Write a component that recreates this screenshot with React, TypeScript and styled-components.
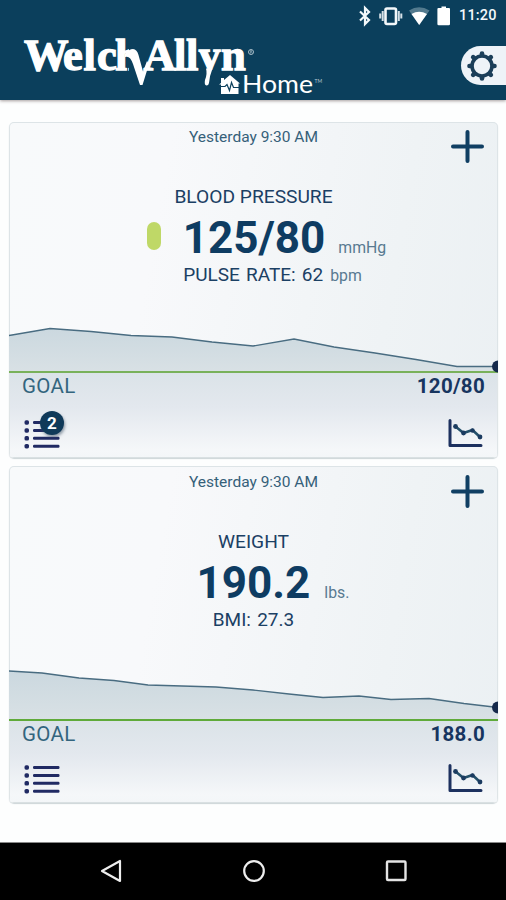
import React from 'react';
import styled, { createGlobalStyle } from 'styled-components';

const NAVY = '#0b3f5c';
const INK = '#17355f';

const GlobalStyle = createGlobalStyle`
  * { box-sizing: border-box; }
  body { margin: 0; background: #fdfefe; font-family: Roboto, sans-serif; }
`;

const Screen = styled.div`
  display: flex;
  flex-direction: column;
  width: 506px;
  height: 900px;
  overflow: hidden;
  background: #fdfefe;
  svg { display: block; }
`;

const Header = styled.header`
  height: 100px;
  flex: none;
  background: ${NAVY};
  box-shadow: 0 1px 3px rgba(60, 40, 40, 0.45);
`;

const StatusBar = styled.div`
  display: flex;
  align-items: center;
  justify-content: flex-end;
  height: 32px;
  padding-right: 9px;
`;

const Clock = styled.span`
  width: 38px;
  margin-left: 8px;
  color: #f4f8fa;
  font-size: 14.5px;
  font-weight: 500;
  line-height: 34px;
  letter-spacing: 0.15px;
  white-space: nowrap;
`;

const BrandBar = styled.div`
  display: flex;
  justify-content: space-between;
  height: 68px;
`;

const LogoSvg = styled.svg`
  flex: none;
  margin-top: -10px;
  overflow: visible;
`;

const SettingsButton = styled.button`
  display: flex;
  align-items: center;
  width: 45px;
  height: 39px;
  margin: 14px 0 0;
  padding: 0 0 0 5px;
  border: 0;
  border-radius: 20px 0 0 20px;
  background: #eef3f8;
`;

const Content = styled.main`
  display: flex;
  flex-direction: column;
  flex: 1;
  gap: 8px;
  padding: 22px 8px 0 9px;
`;

const Card = styled.section<{ $height: number }>`
  position: relative;
  display: flex;
  flex-direction: column;
  height: ${(p) => p.$height}px;
  border-radius: 5px;
  background: linear-gradient(100deg, #f8fafb 0%, #f8f9fb 30%, #eff3f5 75%, #ebf0f3 100%);
  box-shadow: inset 0 0 0 1px #dde4e7, 0 1px 1px #cdd5d8;
  overflow: hidden;
`;

const Summary = styled.div<{ $top: number }>`
  display: flex;
  flex-direction: column;
  align-items: center;
  height: 198px;
  padding-top: ${(p) => p.$top}px;
  flex: none;
  white-space: nowrap;
`;

const Timestamp = styled.div`
  height: 20px;
  color: #356079;
  font-size: 15.5px;
  line-height: 20px;
`;

const Title = styled.h2`
  margin: 38px 0 0;
  color: #1b4064;
  font-size: 19.2px;
  font-weight: 400;
  line-height: 24px;
`;

const AddButton = styled.button<{ $top: number }>`
  position: absolute;
  top: ${(p) => p.$top}px;
  right: 13px;
  padding: 0;
  border: 0;
  background: none;
`;

const Reading = styled.div<{ $shift: number }>`
  display: flex;
  align-items: baseline;
  height: 53px;
  margin-left: ${(p) => p.$shift}px;
`;

const Pill = styled.i`
  align-self: flex-start;
  width: 14px;
  height: 28px;
  margin: 13px 22px 0 0;
  border-radius: 7px;
  background: #bfd867;
`;

const Value = styled.strong`
  color: #0e3c62;
  font-size: 44px;
  font-weight: 700;
  line-height: 58px;
`;

const Unit = styled.span<{ $gap?: number }>`
  margin-left: ${(p) => p.$gap ?? 13}px;
  color: #587a91;
  font-size: 15.8px;
  line-height: 20px;
`;

const Detail = styled.div<{ $shift: number }>`
  margin-left: ${(p) => p.$shift}px;
  color: #1b4064;
  font-size: 19px;
  line-height: 26px;
  word-spacing: 1.5px;
`;

const Footer = styled.div`
  display: flex;
  flex-direction: column;
  flex: 1;
  padding: 0 13px;
  background: linear-gradient(#dbe3e8 0%, #e3e8ee 40%, #f5f7f9 90%, #f3f6f8 100%);
  box-shadow: inset 0 -1px 0 #d9e0e2, inset 1px 0 0 #dfe5e7, inset -1px 0 0 #dfe5e7;
`;

const GoalRow = styled.div`
  display: flex;
  justify-content: space-between;
  height: 26px;
  color: #33657e;
  font-size: 20.5px;
  line-height: 26px;
  letter-spacing: 0.3px;
`;

const GoalValue = styled.b`
  color: ${INK};
  font-weight: 700;
`;

const ActionRow = styled.div<{ $top: number }>`
  display: flex;
  justify-content: space-between;
  align-items: flex-start;
  margin-top: ${(p) => p.$top}px;
  padding: 0 2px;
`;

const ListButton = styled.div`
  position: relative;
`;

const Badge = styled.span`
  position: absolute;
  top: -7px;
  left: 16px;
  width: 24px;
  height: 24px;
  border-radius: 50%;
  background: #103a59;
  box-shadow: 1px 2px 3px rgba(60, 80, 100, 0.55);
  color: #fff;
  font-size: 17px;
  font-weight: 700;
  line-height: 24px;
  text-align: center;
`;

const NavBar = styled.nav`
  display: flex;
  align-items: center;
  justify-content: space-between;
  flex: none;
  height: 58px;
  padding: 0 98px 2px 99px;
  background: #000;
  border-top: 1px solid #888;
`;

const StatusIcons = () => (
  <svg width="94" height="24" viewBox="358 4 94 24">
    <path d="M361 11.500l9 8.500-4 4V8l4 4-9 8.500" fill="none" stroke="#f4f8fa" strokeWidth="2.200" />
    <rect x="386.500" y="8.500" width="10.500" height="15.500" rx="1.500" fill="none" stroke="#f4f8fa" strokeWidth="2.600" />
    <path d="M383.700 11v10M399.800 11v10M381.200 13.500v5M402.300 13.500v5" stroke="#d5e0e7" strokeWidth="2" />
    <path d="M410 10.500Q420 4 430.500 10.500L420.200 25z" fill="#537a8e" />
    <path d="M412.500 14Q420 9.500 428 14L420.200 25z" fill="#fff" />
    <path d="M439.500 8h3V6.500h4.500V8h3q1 0 1 1v15q0 1.300-1.300 1.300h-10q-1.300 0-1.300-1.300V9q0-1 1.100-1z" fill="#fff" />
  </svg>
);

const Logo = () => (
  <LogoSvg width="340" height="78" viewBox="0 22 340 78">
    <defs>
      <clipPath id="stem"><path d="M110 30h19v45h-19z" /></clipPath>
      <clipPath id="aboveBaseline"><path d="M190 30h35v40h-35z" /></clipPath>
    </defs>
    <g fill="#fff" stroke="#fff" strokeWidth="1.300" fontFamily="'Liberation Serif', serif" fontWeight="700" fontSize="44.500">
      <text x="24 63 83.500 97" y="70">Welc</text>
      <text x="115" y="70" clipPath="url(#stem)">h</text>
      <text x="143.500 174 186" y="70">All</text>
      <text x="198.500" y="70" clipPath="url(#aboveBaseline)">y</text>
      <text x="221" y="70">n</text>
    </g>
    <path d="M125 54Q129 49 133 49Q137 49.500 138.500 55L143 71.500L147 61L149 64L142.500 85H140L133 64Q130 55 125 57z" fill="#fff" />
    <path d="M206 68.500H212.500Q209.500 76 209 83Q208.500 85.500 206.500 85.500Q204 85 205 80Q207.500 74 206 68.500z" fill="#fff" />
    <circle cx="251" cy="52" r="2.500" fill="none" stroke="#a9bdc8" strokeWidth="1" />
    <path d="M250.500 53.500v-3h1v1.500l.8 1.500" fill="none" stroke="#a9bdc8" strokeWidth=".6" />
    <path d="M219 84.500l2-1.500v-5h3v2l6-5 10 8.500h-1.500V94H221V84.500z" fill="#fff" />
    <path d="M219 86.500h6l2-2 2.500 6 2-8 2 5h6" fill="none" stroke={NAVY} strokeWidth="1.200" />
    <text x="242" y="93.300" fill="#fff" fontFamily="Lato, sans-serif" fontSize="25" textLength="71" lengthAdjust="spacingAndGlyphs">Home</text>
    <text x="314.500" y="83" fill="#b5c8d2" fontFamily="Lato, sans-serif" fontSize="5">TM</text>
  </LogoSvg>
);

const GearIcon = () => (
  <svg width="32" height="32" viewBox="-16 -16 32 32" fill="none" stroke="#1b3e59">
    <circle r="10" strokeWidth="3.600" />
    {[0, 45, 90, 135, 180, 225, 270, 315].map((a) => (
      <path key={a} d="M0-11v-1.500" strokeWidth="4.600" strokeLinecap="round" transform={`rotate(${a})`} />
    ))}
  </svg>
);

const PlusIcon = () => (
  <svg width="35" height="35" viewBox="0 0 35 35">
    <path d="M17.500 3v29M3 17.500h29" stroke="#103f63" strokeWidth="4" strokeLinecap="round" />
  </svg>
);

const ListIcon = () => (
  <svg width="38" height="32" viewBox="0 0 38 32">
    {[4.500, 12.500, 20.300, 28.200].map((y) => (
      <g key={y} fill="#202a63">
        <rect x="0.500" y={y - 2.200} width="4.500" height="4.400" rx="1.600" />
        <rect x="9" y={y - 1.500} width="26.500" height="3" rx="1.200" />
      </g>
    ))}
  </svg>
);

const TrendIcon = () => (
  <svg width="35" height="32" viewBox="0 0 35 32" fill="none">
    <path d="M2 2.500V27.500H33" stroke="#1d315f" strokeWidth="3" strokeLinecap="round" strokeLinejoin="round" />
    <path d="M7.500 8.500l8 6.500 9-3 8 7.500" stroke="#24506a" strokeWidth="2.600" />
    <g fill="#1b3b60">
      <circle cx="7.500" cy="8.500" r="2.400" />
      <circle cx="15.500" cy="15" r="2.400" />
      <circle cx="24.500" cy="12.500" r="2.200" />
      <circle cx="32" cy="19" r="2.400" />
    </g>
  </svg>
);

type ChartProps = { id: string; height: number; points: [number, number][]; goal: string };

const TrendChart = ({ id, height, points, goal }: ChartProps) => {
  const line = points.map((p) => p.join(',')).join(' ');
  const last = points[points.length - 1];
  return (
    <svg width="489" height={height} viewBox={`0 0 489 ${height}`}>
      <defs>
        <linearGradient id={id} x1="0" y1="0" x2="0" y2="1">
          <stop offset="0" stopColor="#cbd8df" />
          <stop offset="1" stopColor="#d9e1e5" />
        </linearGradient>
      </defs>
      <polygon points={`0,${height} ${line} 489,${height}`} fill={`url(#${id})`} />
      <polyline points={line} fill="none" stroke="#496c81" strokeWidth="1.300" />
      <path d={`M0 ${height - 1}H489`} stroke={goal} strokeWidth="2" />
      <circle cx={last[0]} cy={last[1]} r="6" fill="#15294b" />
    </svg>
  );
};

const pressure: [number, number][] = [
  [0, 15.5], [41, 8.5], [82, 11.5], [122, 15.5], [163, 17], [203, 22], [244, 26], [285, 19],
  [325, 27], [366, 33], [407, 39.5], [448, 46.5], [489, 46.5],
];

const weight: [number, number][] = [
  [0, 7], [33, 9], [70, 14], [105, 16.5], [139, 21], [207, 23], [244, 26], [280, 30],
  [314, 33.5], [350, 32], [382, 35.5], [420, 34.5], [455, 39.5], [489, 43.5],
];

export default function App() {
  return (
    <Screen>
      <GlobalStyle />
      <Header>
        <StatusBar>
          <StatusIcons />
          <Clock>11:20</Clock>
        </StatusBar>
        <BrandBar>
          <Logo />
          <SettingsButton aria-label="Settings"><GearIcon /></SettingsButton>
        </BrandBar>
      </Header>
      <Content>
        <Card $height={336}>
          <Summary $top={5}>
            <Timestamp>Yesterday 9:30 AM</Timestamp>
            <Title>BLOOD PRESSURE</Title>
            <Reading $shift={26}>
              <Pill />
              <Value>125/80</Value>
              <Unit>mmHg</Unit>
            </Reading>
            <Detail $shift={38}>PULSE RATE: 62<Unit $gap={7}>bpm</Unit></Detail>
          </Summary>
          <AddButton $top={7} aria-label="Add blood pressure"><PlusIcon /></AddButton>
          <TrendChart id="pressureFill" height={53} points={pressure} goal="#79b15a" />
          <Footer>
            <GoalRow><span>GOAL</span><GoalValue>120/80</GoalValue></GoalRow>
            <ActionRow $top={19}>
              <ListButton><ListIcon /><Badge>2</Badge></ListButton>
              <TrendIcon />
            </ActionRow>
          </Footer>
        </Card>
        <Card $height={337}>
          <Summary $top={6}>
            <Timestamp>Yesterday 9:30 AM</Timestamp>
            <Title>WEIGHT</Title>
            <Reading $shift={39}>
              <Value>190.2</Value>
              <Unit $gap={14}>lbs.</Unit>
            </Reading>
            <Detail $shift={0}>BMI: 27.3</Detail>
          </Summary>
          <AddButton $top={8} aria-label="Add weight"><PlusIcon /></AddButton>
          <TrendChart id="weightFill" height={57} points={weight} goal="#5faa3a" />
          <Footer>
            <GoalRow><span>GOAL</span><GoalValue>188.0</GoalValue></GoalRow>
            <ActionRow $top={16}>
              <ListIcon />
              <TrendIcon />
            </ActionRow>
          </Footer>
        </Card>
      </Content>
      <NavBar>
        <svg width="24" height="24" viewBox="0 0 24 24"><path d="M3 12L21 2v20z" fill="none" stroke="#eee" strokeWidth="2.200" strokeLinejoin="round" /></svg>
        <svg width="24" height="24" viewBox="0 0 24 24"><circle cx="12" cy="12" r="9.800" fill="none" stroke="#eee" strokeWidth="2.200" /></svg>
        <svg width="24" height="24" viewBox="0 0 24 24"><rect x="3" y="2.500" width="18.500" height="18.500" rx="1" fill="none" stroke="#e4e4e4" strokeWidth="2.400" /></svg>
      </NavBar>
    </Screen>
  );
}
